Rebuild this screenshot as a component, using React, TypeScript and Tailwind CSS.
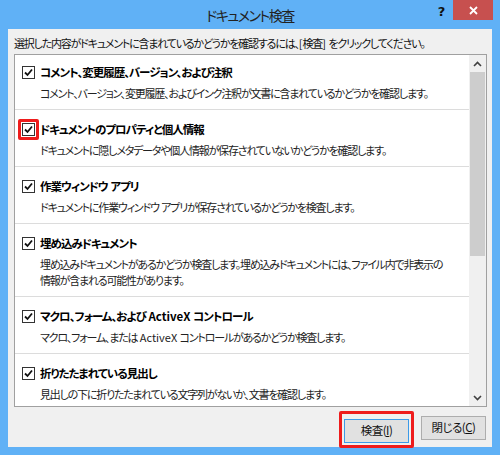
import React from 'react';

const font = "font-['Meiryo_UI','Noto_Sans_CJK_JP',sans-serif] [font-feature-settings:'palt']";

type Item = { title: string; desc: string[]; highlight?: boolean };

const items: Item[] = [
  {
    title: 'コメント、変更履歴、バージョン、および注釈',
    desc: ['コメント、バージョン、変更履歴、およびインク注釈が文書に含まれているかどうかを確認します。'],
  },
  {
    title: 'ドキュメントのプロパティと個人情報',
    desc: ['ドキュメントに隠しメタデータや個人情報が保存されていないかどうかを確認します。'],
    highlight: true,
  },
  {
    title: '作業ウィンドウ アプリ',
    desc: ['ドキュメントに作業ウィンドウ アプリが保存されているかどうかを検査します。'],
  },
  {
    title: '埋め込みドキュメント',
    desc: [
      '埋め込みドキュメントがあるかどうか検査します。埋め込みドキュメントには、ファイル内で非表示の',
      '情報が含まれる可能性があります。',
    ],
  },
  {
    title: 'マクロ、フォーム、および ActiveX コントロール',
    desc: ['マクロ、フォーム、または ActiveX コントロールがあるかどうか検査します。'],
  },
  {
    title: '折りたたまれている見出し',
    desc: ['見出しの下に折りたたまれている文字列がないか、文書を確認します。'],
  },
];

// latin runs and spaces keep their normal spacing, only the kana/kanji are tightened
const jp = (text: string) =>
  text.split(/([ -~]+)/).map((part, i) =>
    /^[ -~]+$/.test(part) ? (
      <span key={i} className="tracking-[0px] whitespace-pre">
        {part}
      </span>
    ) : (
      <React.Fragment key={i}>{part}</React.Fragment>
    )
  );

const Checkbox: React.FC = () => (
  <div className="w-[13px] h-[13px] border border-[#333333] bg-white flex items-center justify-center shrink-0">
    <svg width="9" height="9" viewBox="0 0 9 9">
      <path d="M1 4.5 L3.5 7 L8 1.5" fill="none" stroke="#111" strokeWidth="1.8" />
    </svg>
  </div>
);

const Row: React.FC<{ item: Item; first: boolean }> = ({ item, first }) => (
  <div className={`pl-[7px] pb-[8px] ${first ? 'pt-[9px]' : 'pt-[11px] border-t border-[#dcdcdc]'}`}>
    <div className="flex items-center h-[17px]">
      {item.highlight ? (
        <div className="-m-[4px] border-[3px] border-[#ee1c1c] rounded-[2px] p-[1px] shrink-0">
          <Checkbox />
        </div>
      ) : (
        <Checkbox />
      )}
      <span className="ml-[5px] font-bold text-[11.5px] tracking-[-1px] leading-[17px] text-black whitespace-nowrap">
        {jp(item.title)}
      </span>
    </div>
    <div className="ml-[18px] mt-[4px] text-[11px] tracking-[-1.2px] leading-[16px] text-[#222] whitespace-nowrap">
      {item.desc.map((d) => (
        <div key={d}>{jp(d)}</div>
      ))}
    </div>
  </div>
);

const Chevron: React.FC<{ up?: boolean }> = ({ up }) => (
  <svg width="9" height="6" viewBox="0 0 9 6">
    <path
      d={up ? 'M1 5 L4.5 1.5 L8 5' : 'M1 1 L4.5 4.5 L8 1'}
      fill="none"
      stroke="#404040"
      strokeWidth="1.6"
    />
  </svg>
);

export default function App() {
  return (
    <div className={`w-[500px] h-[455px] bg-[#60b1f6] flex flex-col ${font}`}>
      {/* title bar */}
      <div className="h-[29px] flex items-start shrink-0">
        <div className="w-[70px]" />
        <div className="flex-1 text-center text-[14px] tracking-[-1.5px] leading-[30px] text-[#222]">ドキュメント検査</div>
        <div className="w-[70px] flex items-start">
          <div className="w-[23px] h-[21px] flex items-center justify-center font-['DejaVu_Sans',sans-serif] font-bold text-[13px] text-[#111] pt-[3px]">
            ?
          </div>
          <div className="w-[40px] h-[20px] bg-[#c7504f] flex items-center justify-center">
            <svg width="9" height="9" viewBox="0 0 9 9">
              <path d="M1 1 L8 8 M8 1 L1 8" stroke="white" strokeWidth="1.8" />
            </svg>
          </div>
        </div>
      </div>

      {/* body */}
      <div className="flex-1 mx-[8px] mb-[8px] bg-[#f0f0f0] flex flex-col px-[6px] pr-[5px] pt-[6px]">
        <div className="text-[11px] tracking-[-1.2px] leading-[16px] text-[#111] whitespace-nowrap">
          {jp('選択した内容がドキュメントに含まれているかどうかを確認するには、[検査] をクリックしてください。')}
        </div>

        <div className="mt-[3px] h-[353px] border border-[#a0a0a0] bg-white flex overflow-hidden">
          <div className="flex-1 overflow-hidden">
            {items.map((it, i) => (
              <Row key={it.title} item={it} first={i === 0} />
            ))}
          </div>
          <div className="w-[17px] bg-[#f0f0f0] flex flex-col">
            <div className="h-[17px] flex items-center justify-center">
              <Chevron up />
            </div>
            <div className="h-[184px] mx-[1px] bg-[#cdcdcd]" />
            <div className="flex-1" />
            <div className="h-[17px] flex items-center justify-center">
              <Chevron />
            </div>
          </div>
        </div>

        <div className="flex justify-end gap-[12px] mt-[9px] pr-[1px]">
          <div className="-m-[5px] border-[3px] border-[#ee1c1c] rounded-[2px] p-[2px]">
            <button className="w-[65px] h-[24px] bg-[#e1e1e1] border border-[#3c9ae8] text-[11.5px] tracking-[-0.5px] text-[#111]">
              検査(<span className="underline">I</span>)
            </button>
          </div>
          <button className="w-[65px] h-[24px] bg-[#e1e1e1] border border-[#adadad] text-[11.5px] tracking-[-0.5px] text-[#111]">
            閉じる(<span className="underline">C</span>)
          </button>
        </div>
      </div>
    </div>
  );
}
